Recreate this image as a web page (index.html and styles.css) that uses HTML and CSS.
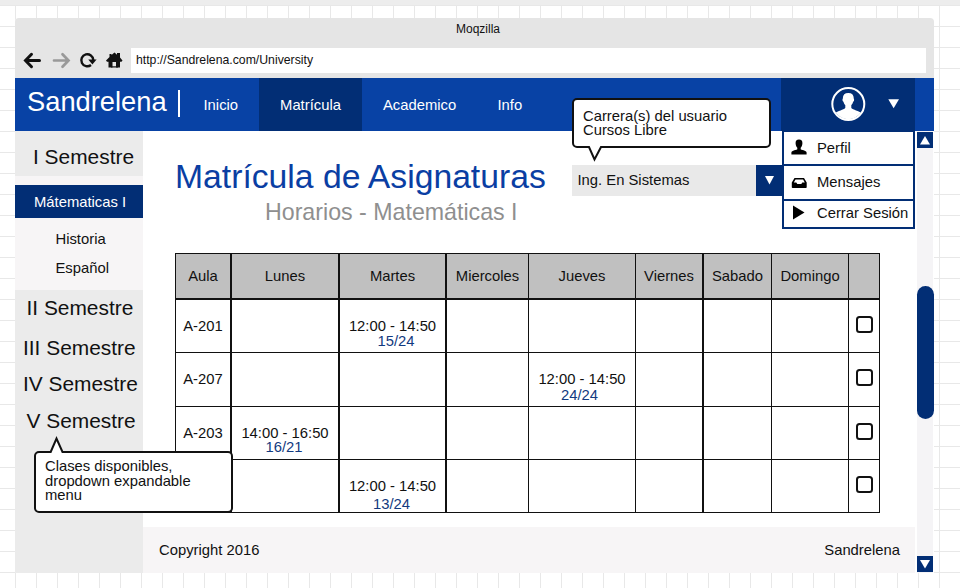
FILE: index.html
```html
<!DOCTYPE html>
<html lang="es">
<head>
<meta charset="utf-8">
<title>Moqzilla</title>
<link rel="stylesheet" href="styles.css">
</head>
<body>
<div class="window">
  <div class="chrome">
    <div class="chrome-title">Moqzilla</div>
    <div class="chrome-bar">
      <svg class="chrome-icons" width="116" height="25" viewBox="15 48 116 25">
        <path d="M39.500 60.500H26M31.500 54.300l-6 6.200 6 6.200" fill="none" stroke="#111" stroke-width="3" stroke-linecap="round"/>
        <path d="M54 60.500h13M62.500 54.300l6 6.200-6 6.200" fill="none" stroke="#999" stroke-width="2.700" stroke-linecap="round"/>
        <path d="M91 65A6 6 0 1 1 93.300 60" fill="none" stroke="#111" stroke-width="2.400"/>
        <path d="M88.300 59.400h8.300l-4.200 5.200z" fill="#111"/>
        <path d="M106 60.500l3.500-3.500V54h2v1l3-2.500 2.500 2.300V53h3v4.500l2.500 3-1 1.200h-1.500V67.500h-4V62h-3.500v5.500h-4v-5.800h-1.500z" fill="#111"/>
        <path d="M111 66.300h7v1.200h-7z" fill="#111"/>
      </svg>
      <div class="address">http://Sandrelena.com/University</div>
    </div>
  </div>

  <header class="header">
    <div class="brand"><span>Sandrelena</span><i class="brand-rule"></i></div>
    <nav class="nav">
      <a class="nav-inicio">Inicio</a>
      <a class="nav-matricula">Matrícula</a>
      <a class="nav-academico">Academico</a>
      <a class="nav-info">Info</a>
    </nav>
    <div class="user">
      <svg width="134" height="53" viewBox="781 78 134 53">
        <circle cx="848.300" cy="104" r="16" fill="none" stroke="#fff" stroke-width="2"/>
        <path d="M848.300 93c3.800 0 5.700 2.200 5.400 5.600c.7.300.5 2.800-.6 3.100c-.3 1.500-1 2.600-1.800 3.300v2.800c0 1.700 5.500 2.300 9.500 4.800a15 15 0 0 1-25 0c4-2.500 9.500-3.100 9.500-4.800V105c-.8-.7-1.500-1.800-1.800-3.300c-1.100-.3-1.300-2.800-.6-3.100c-.3-3.400 1.600-5.600 5.400-5.600z" fill="#fff"/>
        <path d="M888.300 99.300h10.700l-5.350 9z" fill="#fff"/>
      </svg>
      <ul class="user-menu">
        <li class="menu-perfil">
          <svg width="33" height="32" viewBox="784 132 33 32"><path d="M799 139.500c2.500 0 3.600 1.600 3.400 4c-.1 2-.8 3.300-1.700 4.200v1.500c0 .9 5.900 .8 5.900 3.400v2h-15.200v-2c0-2.600 5.900-2.500 5.900-3.400v-1.500c-.9-.9-1.600-2.200-1.700-4.200c-.2-2.400.9-4 3.400-4z"/></svg>
          Perfil</li>
        <li class="menu-mensajes">
          <svg width="33" height="33" viewBox="784 166 33 33"><path fill-rule="evenodd" d="M794.500 178h9.500l2.700 4.500v4.700q0 .8-.8.800h-13.300q-.8 0-.8-.8v-4.700zM795.500 179.500l-1.700 3h2.500l1 1.500h4l1-1.500h2.500l-1.700-3z"/></svg>
          Mensajes</li>
        <li class="menu-cerrar">
          <svg width="33" height="27" viewBox="784 199.500 33 27"><path d="M793 206l11.500 7-11.500 7z"/></svg>
          Cerrar Sesión</li>
      </ul>
    </div>
  </header>

  <div class="body">
    <aside class="sidebar">
      <div class="semester semester-1">I Semestre</div>
      <div class="courses">
        <div class="course course-active">Mátematicas I</div>
        <div class="course">Historia</div>
        <div class="course">Español</div>
      </div>
      <div class="semester semester-2">II Semestre</div>
      <div class="semester semester-3">III Semestre</div>
      <div class="semester semester-4">IV Semestre</div>
      <div class="semester semester-5">V Semestre</div>
      <div class="callout callout-courses">Clases disponibles,<br>dropdown expandable<br>menu
        <svg class="tail-up" width="18" height="17" viewBox="0 0 18 17"><path d="M2.500 14.500L8.500 2.500l6 12V17h-12z" fill="#fff"/><path d="M1 16h1.700L8.500 2.500l6 13.500H17" fill="none" stroke="#111" stroke-width="2"/></svg>
      </div>
    </aside>

    <main class="main">
      <section class="intro">
        <div class="headings">
          <h1>Matrícula de Asignaturas</h1>
          <h2>Horarios - Matemáticas I</h2>
        </div>
        <div class="career">
          <div class="career-value">Ing. En Sistemas</div>
          <div class="career-button"><svg width="9" height="9" viewBox="0 0 9 9"><path d="M0 0h9L4.500 8.500z" fill="#fff"/></svg></div>
          <div class="callout callout-career">Carrera(s) del usuario<br>Cursos Libre
            <svg class="tail-down" width="20" height="17" viewBox="0 0 20 17"><path d="M3.500 0h12.500v2L9.500 14 3.500 2z" fill="#fff"/><path d="M2 2h2L9.500 14.500 16 2h2" fill="none" stroke="#111" stroke-width="2"/></svg>
          </div>
        </div>
      </section>

      <div class="schedule">
        <div class="row head"><div>Aula</div><div>Lunes</div><div>Martes</div><div>Miercoles</div><div>Jueves</div><div>Viernes</div><div>Sabado</div><div>Domingo</div><div></div></div>
        <div class="row"><div>A-201</div><div></div><div><p class="time">12:00 - 14:50</p><p class="seats seats-a">15/24</p></div><div></div><div></div><div></div><div></div><div></div><div><i class="check"></i></div></div>
        <div class="row row-tall"><div>A-207</div><div></div><div></div><div></div><div><p class="time">12:00 - 14:50</p><p class="seats seats-b">24/24</p></div><div></div><div></div><div></div><div><i class="check"></i></div></div>
        <div class="row"><div>A-203</div><div><p class="time">14:00 - 16:50</p><p class="seats seats-c">16/21</p></div><div></div><div></div><div></div><div></div><div></div><div></div><div><i class="check"></i></div></div>
        <div class="row"><div></div><div></div><div><p class="time">12:00 - 14:50</p><p class="seats seats-d">13/24</p></div><div></div><div></div><div></div><div></div><div></div><div><i class="check"></i></div></div>
      </div>

      <footer class="footer"><span>Copyright 2016</span><span>Sandrelena</span></footer>
    </main>

    <div class="scrollbar">
      <div class="scroll-button"><svg width="10" height="9" viewBox="0 0 10 9"><path d="M5 0l5 8.500H0z" fill="#fff"/></svg></div>
      <div class="scroll-thumb"></div>
      <div class="scroll-button"><svg width="10" height="9" viewBox="0 0 10 9"><path d="M0 0h10L5 8.500z" fill="#fff"/></svg></div>
    </div>
  </div>
</div>
</body>
</html>
```

FILE: styles.css
```css
* { box-sizing: border-box; }

body {
  margin: 0;
  height: 588px;
  overflow: hidden;
  padding: 13px 0 0 15px;
  border-top: 5px solid #ededed;
  background-color: #fff;
  background-image:
    linear-gradient(90deg, #e8e8e8 1px, transparent 1px),
    linear-gradient(#e8e8e8 1px, transparent 1px);
  background-size: 21px 21px;
  background-position: 15px 26px;
  font: 14.8px/18px "Liberation Sans", Arial, sans-serif;
  color: #111;
}

p, h1, h2, ul { margin: 0; padding: 0; font-weight: 400; }
svg { display: block; }

.window { width: 919px; height: 555px; background: #fff; border-radius: 4px 4px 0 0; }

/* Browser chrome */
.chrome { height: 60px; background: #e5e5e5; border-radius: 4px 4px 0 0; }
.chrome-title { height: 30px; padding: 2px 0 0 7px; text-align: center; font-size: 12px; }
.chrome-bar { display: flex; }
.address { width: 795px; height: 25px; padding-left: 5px; background: #fff; font-size: 12.25px; line-height: 25px; }

/* Header */
.header { display: flex; height: 53px; background: #0842a5; color: #fff; }
.brand { display: flex; width: 168px; padding: 9px 0 0 12px; font-size: 27.300px; line-height: 30px; }
.brand-rule { width: 2.500px; height: 27px; margin: 3px 0 0 11px; background: #fff; }
.nav { display: flex; width: 598px; line-height: 54px; }
.nav-inicio { width: 76px; padding-left: 20.500px; }
.nav-matricula { width: 103px; text-align: center; background: #022e75; }
.nav-academico { width: 135.500px; padding-left: 21px; }
.user { position: relative; width: 134px; background: #022e75; }
.user-menu {
  position: absolute; z-index: 2; top: 53px; left: 1px; width: 133px; height: 98px;
  border: 2px solid #022e75; border-top-width: 1px;
  background: #fff; color: #111; list-style: none;
}
.user-menu li { display: flex; align-items: center; }
.user-menu svg { flex: none; fill: #000; }
.menu-perfil { height: 34px; border-bottom: 2px solid #022e75; }
.menu-mensajes { height: 35px; padding-bottom: 1px; border-bottom: 2px solid #022e75; }
.menu-cerrar { height: 23px; white-space: nowrap; }

/* Page body */
.body { display: flex; height: 442px; }
.sidebar { position: relative; width: 128px; background: #ebebeb; }
.semester { font-size: 20.900px; line-height: 24px; white-space: nowrap; }
.semester-1 { height: 45px; padding: 14px 0 0 18px; }
.semester-2 { padding: 6px 0 0 11.500px; }
.semester-3 { padding: 16px 0 0 8px; }
.semester-4 { padding: 12px 0 0 8px; }
.semester-5 { padding: 13px 0 0 11.500px; }
.courses { height: 114px; padding-top: 8.500px; background: #f7f5f6; }
.course { height: 29px; padding-left: 40.500px; line-height: 29px; }
.course-active { height: 33.500px; margin-bottom: 7px; padding-left: 19px; background: #022e75; color: #fff; line-height: 34px; }

.main { display: flex; flex-direction: column; width: 772px; }
.intro { display: flex; height: 122px; padding-left: 32px; }
.headings { width: 397px; padding-top: 26px; }
h1 { font-size: 33.700px; line-height: 38px; color: #0a3ea3; white-space: nowrap; }
h2 { margin-left: 90px; font-size: 23.200px; line-height: 34px; color: #8f8f8f; white-space: nowrap; }
.career { position: relative; display: flex; width: 210px; height: 31px; margin-top: 34px; }
.career-value { width: 184px; padding-left: 5.500px; background: #e9e9e9; line-height: 31px; }
.career-button { display: flex; align-items: center; justify-content: center; width: 26px; padding-bottom: 1px; background: #022e75; }

.callout {
  position: absolute; z-index: 3; width: 199px; padding: 9px 0 0 9px;
  border: 2px solid #111; border-radius: 5px; background: #fff; line-height: 14.300px;
}
.callout-career { left: 0; top: -67px; height: 50px; }
.callout-courses { left: 19px; top: 320px; height: 62px; padding-top: 6px; line-height: 14.600px; }
.tail-down { position: absolute; left: 11px; top: 45px; }
.tail-up { position: absolute; left: 12px; top: -17px; }

/* Schedule */
.schedule { width: 705px; margin-left: 32px; border-top: 1px solid #111; border-left: 1px solid #111; }
.row { display: grid; grid-template-columns: 56px 108px 107px 82px 107px 68px 68px 77px 31px; height: 53px; }
.row-tall { height: 54px; }
.row > div { padding-top: 17px; border-right: 1px solid #111; border-bottom: 1px solid #111; text-align: center; }
.row > div:nth-child(1), .row > div:nth-child(2), .row > div:nth-child(3), .row > div:nth-child(6) { border-right-width: 2px; }
.head { height: 46px; }
.head > div { padding-top: 13px; border-bottom-width: 2px; background: #c0c0c0; }
.time { padding-top: 1px; line-height: 16px; }
.seats { line-height: 14px; color: #123a80; }
.seats-a { margin: 0 0 0 7px; }
.seats-b { margin: 1px 5px 0 0; }
.seats-c { margin: 0 2px 0 0; line-height: 13px; }
.seats-d { margin: 3px 2px 0 0; }
.check { display: block; width: 17px; height: 17px; margin: -1px 0 0 6.500px; border: 2px solid #111; border-radius: 3.500px; }

.footer { display: flex; justify-content: space-between; height: 46px; margin-top: auto; padding: 0 15px 0 16px; background: #f7f5f6; line-height: 46px; }

/* Scrollbar */
.scrollbar { display: flex; flex-direction: column; width: 16px; margin-left: 2px; padding: 1px 0; background: #f5f4f6; }
.scroll-button { display: flex; align-items: center; justify-content: center; height: 16px; background: #022e75; }
.scroll-thumb { height: 133px; margin: 138px -0.500px auto; border-radius: 9px; background: #022e75; }
```
